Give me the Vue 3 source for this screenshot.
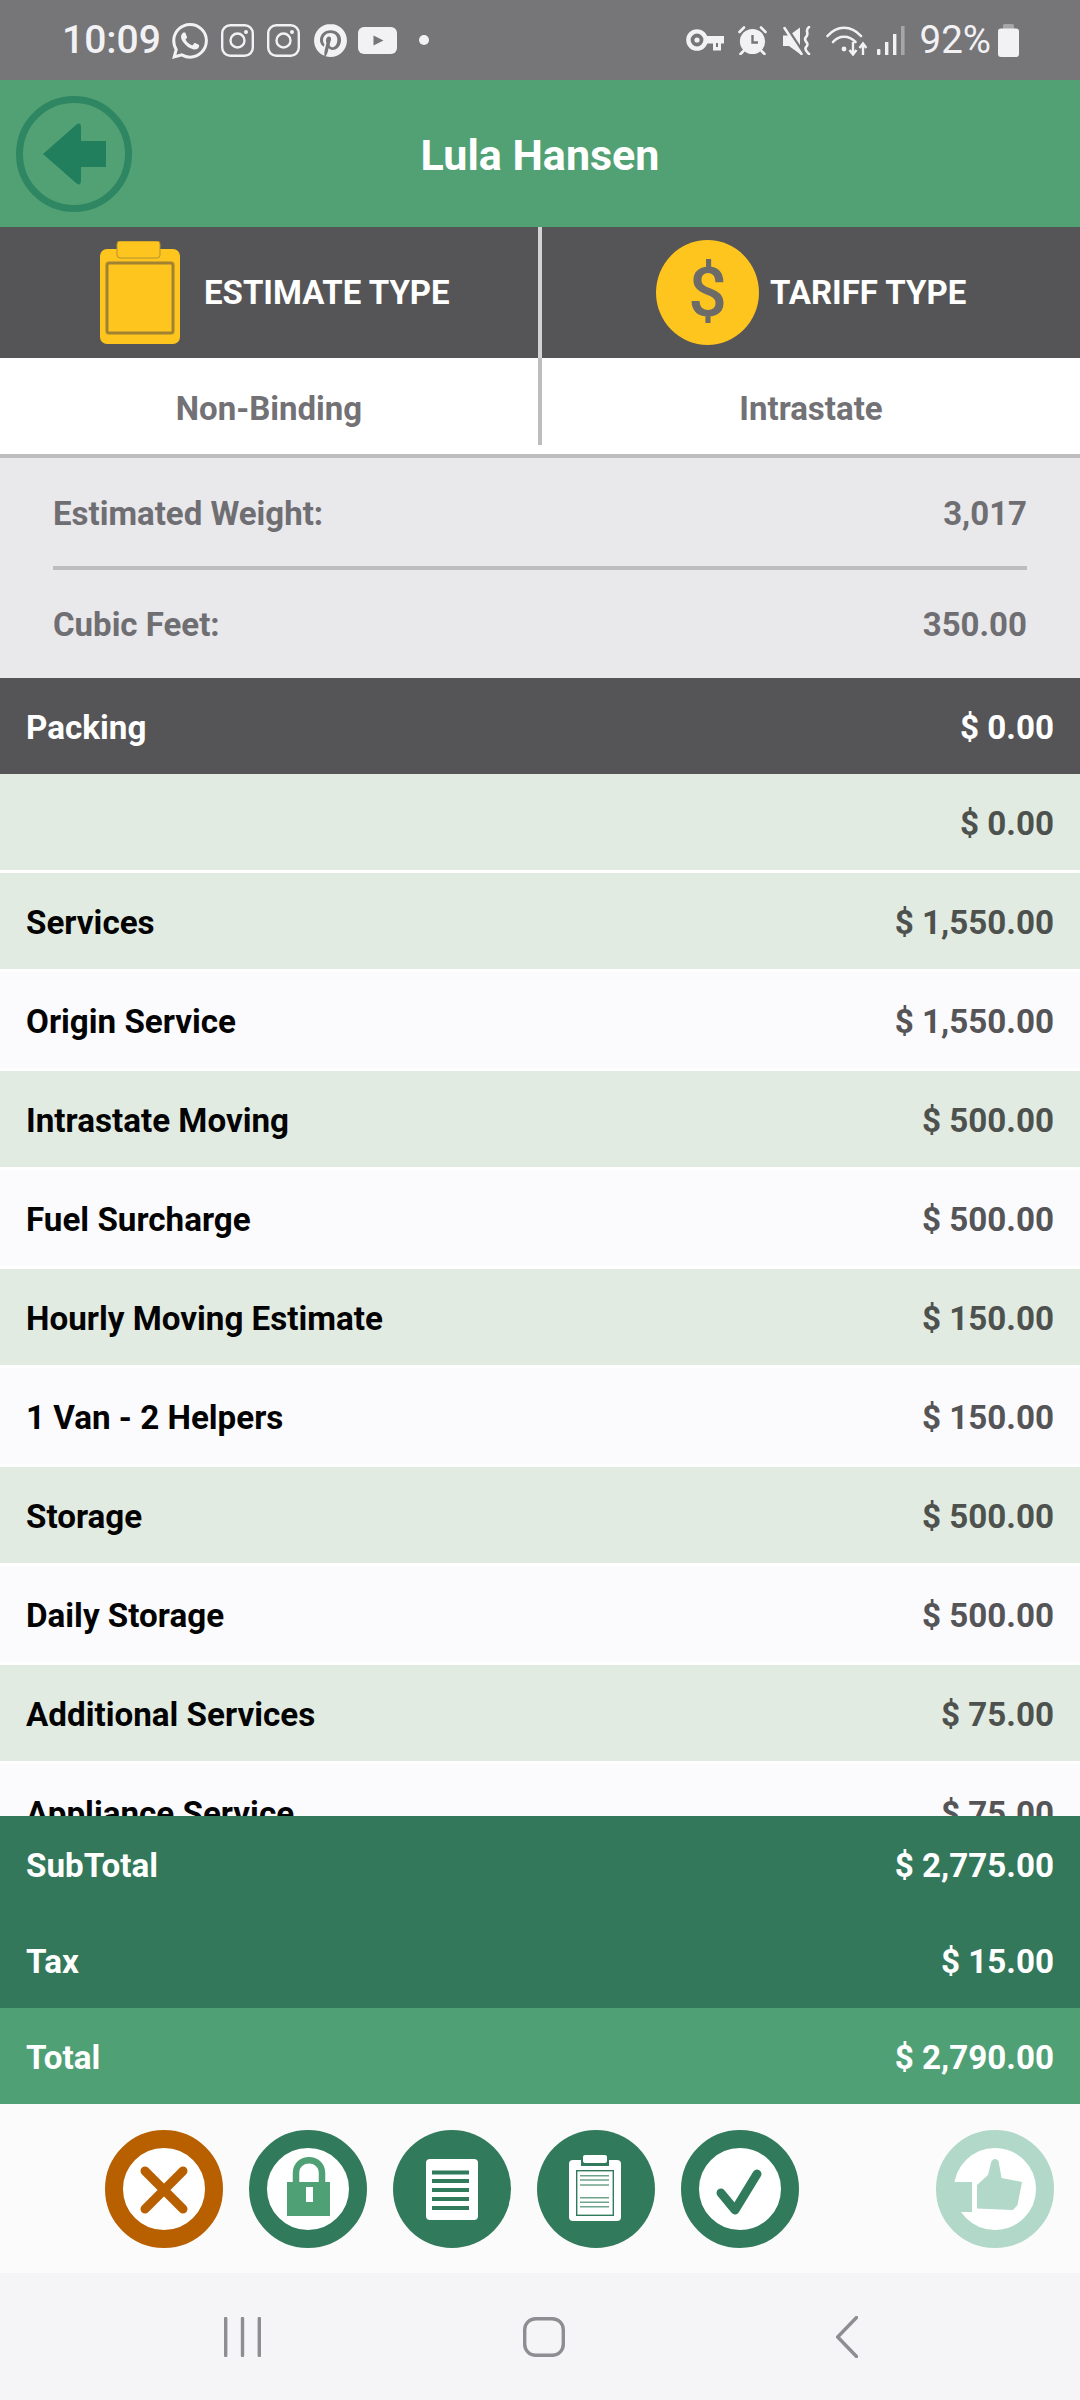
<template>
  <div class="screen">
    <!-- system status bar -->
    <div class="status-bar">
      <div class="status-left">
        <span class="clock">10:09</span>
        <svg class="ic-whatsapp" viewBox="0 0 24 24"><path fill="currentColor" d="M17.472 14.382c-.297-.149-1.758-.867-2.03-.967-.273-.099-.471-.148-.67.15-.197.297-.767.966-.94 1.164-.173.199-.347.223-.644.075-.297-.15-1.255-.463-2.39-1.475-.883-.788-1.48-1.761-1.653-2.059-.173-.297-.018-.458.13-.606.134-.133.298-.347.446-.52.149-.174.198-.298.298-.497.099-.198.05-.371-.025-.52-.075-.149-.669-1.612-.916-2.207-.242-.579-.487-.5-.669-.51-.173-.008-.371-.01-.57-.01-.198 0-.52.074-.792.372-.272.297-1.04 1.016-1.04 2.479 0 1.462 1.065 2.875 1.213 3.074.149.198 2.096 3.2 5.077 4.487.709.306 1.262.489 1.694.625.712.227 1.36.195 1.871.118.571-.085 1.758-.719 2.006-1.413.248-.694.248-1.289.173-1.413-.074-.124-.272-.198-.57-.347m-5.421 7.403h-.004a9.87 9.87 0 01-5.031-1.378l-.361-.214-3.741.982.998-3.648-.235-.374a9.86 9.86 0 01-1.51-5.26c.001-5.45 4.436-9.884 9.888-9.884 2.64 0 5.122 1.03 6.988 2.898a9.825 9.825 0 012.893 6.994c-.003 5.45-4.437 9.884-9.885 9.884m8.413-18.297A11.815 11.815 0 0012.05 0C5.495 0 .16 5.335.157 11.892c0 2.096.547 4.142 1.588 5.945L.057 24l6.305-1.654a11.882 11.882 0 005.683 1.448h.005c6.554 0 11.89-5.335 11.893-11.893a11.821 11.821 0 00-3.48-8.413z"/></svg>
        <svg v-for="n in 2" :key="n" class="ic-insta" viewBox="0 0 33 33">
          <rect x="1.2" y="1.2" width="30.6" height="30.6" rx="8" fill="none" stroke="currentColor" stroke-width="2.4"/>
          <circle cx="16.5" cy="16.5" r="7" fill="none" stroke="currentColor" stroke-width="2.4"/>
          <circle cx="25" cy="8" r="2" fill="currentColor"/>
        </svg>
        <svg class="ic-pin" viewBox="0 0 24 24"><path fill="currentColor" d="M12.017 0C5.396 0 .029 5.367.029 11.987c0 5.079 3.158 9.417 7.618 11.162-.105-.949-.199-2.403.041-3.439.219-.937 1.406-5.957 1.406-5.957s-.359-.72-.359-1.781c0-1.663.967-2.911 2.168-2.911 1.024 0 1.518.769 1.518 1.688 0 1.029-.653 2.567-.992 3.992-.285 1.193.6 2.165 1.775 2.165 2.128 0 3.768-2.245 3.768-5.487 0-2.861-2.063-4.869-5.008-4.869-3.41 0-5.409 2.562-5.409 5.199 0 1.033.394 2.143.889 2.741.099.12.112.225.085.345-.09.375-.293 1.199-.334 1.363-.053.225-.172.271-.401.165-1.495-.69-2.433-2.878-2.433-4.646 0-3.776 2.748-7.252 7.92-7.252 4.158 0 7.392 2.967 7.392 6.923 0 4.135-2.607 7.462-6.233 7.462-1.214 0-2.354-.629-2.758-1.379l-.749 2.848c-.269 1.045-1.004 2.352-1.498 3.146 1.123.345 2.306.535 3.55.535 6.607 0 11.985-5.365 11.985-11.987C23.97 5.39 18.592.026 11.985.026L12.017 0z"/></svg>
        <svg class="ic-yt" viewBox="0 0 39 27">
          <rect width="39" height="27" rx="6" fill="currentColor"/>
          <path d="M15.5 8.5 L25.5 13.5 L15.5 18.5 Z" fill="#767578"/>
        </svg>
        <span class="dot"></span>
      </div>
      <div class="status-right">
        <svg class="ic-key" viewBox="0 0 38 22">
          <circle cx="11" cy="11" r="8.6" fill="none" stroke="currentColor" stroke-width="4.4"/>
          <circle cx="11" cy="11" r="2.6" fill="currentColor"/>
          <path d="M20 7 H38 V14.5 H35 V21.5 H27 V14.5 H20 Z" fill="currentColor"/>
          <path d="M30 14 V18 H32 V14 Z" fill="#767578"/>
        </svg>
        <svg class="ic-alarm" viewBox="0 0 29 29">
          <circle cx="14.5" cy="15.5" r="12.6" fill="currentColor"/>
          <path d="M14.5 9 V16.5 H20" fill="none" stroke="#767578" stroke-width="2.4"/>
          <path d="M1.5 6 L6 1.5 M27.5 6 L23 1.5 M5.5 25 L2.5 28 M23.5 25 L26.5 28" stroke="currentColor" stroke-width="2.6" stroke-linecap="round"/>
        </svg>
        <svg class="ic-mute" viewBox="0 0 30 29">
          <path d="M0 9.5 H6 L17 1.5 V28 L6 20 H0 Z" fill="currentColor"/>
          <path d="M3 1 L20 27" stroke="#767578" stroke-width="3.4"/>
          <path d="M1.5 2 L18.5 28" stroke="currentColor" stroke-width="2.6" stroke-linecap="round"/>
          <path d="M26 1 C 21 5 27 7 23 11 C 19 15 28 17 23 21 C 21 24 24 26 26 28" fill="none" stroke="currentColor" stroke-width="2.6" stroke-linecap="round"/>
        </svg>
        <svg class="ic-wifi" viewBox="0 0 41 31">
          <path d="M1.5 11 C 11 0 25 0 35 11" fill="none" stroke="currentColor" stroke-width="2.6" stroke-linecap="round"/>
          <path d="M7 17 C 13 10 23 10 29.5 17" fill="none" stroke="currentColor" stroke-width="2.6" stroke-linecap="round"/>
          <circle cx="18" cy="24" r="2.4" fill="currentColor"/>
          <path d="M27 17 V29 M23.5 25 L27 29.5 L30.5 25 M37 30 V19 M33.5 23 L37 18.5 L40.5 23" fill="none" stroke="currentColor" stroke-width="2.4"/>
        </svg>
        <svg class="ic-signal" viewBox="0 0 28 29">
          <rect x="0" y="23" width="3.4" height="6" rx="1" fill="currentColor"/>
          <rect x="8" y="16" width="3.4" height="13" fill="currentColor"/>
          <rect x="16" y="8" width="3.4" height="21" fill="currentColor"/>
          <rect x="24" y="0" width="3.6" height="29" fill="#a6a5a8"/>
        </svg>
        <span class="battery-pct">92%</span>
        <svg class="ic-battery" viewBox="0 0 21 33">
          <rect x="5" y="0" width="11" height="6" rx="1.5" fill="#a6a5a8"/>
          <rect x="0" y="4.5" width="21" height="28.5" rx="3" fill="currentColor"/>
        </svg>
      </div>
    </div>

    <!-- customer header -->
    <header class="app-header">
      <div class="back-cell">
        <svg class="back-btn" viewBox="0 0 116 116">
          <circle cx="58" cy="58" r="54.5" fill="none" stroke="#2f8662" stroke-width="7"/>
          <path d="M27 58 L60 29 Q65 25 65 32 V45 H90 V71 H65 V84 Q65 91 60 87 Z" fill="#217f5e"/>
        </svg>
      </div>
      <h1 class="customer-name">Lula Hansen</h1>
    </header>

    <!-- estimate / tariff summary -->
    <section class="types">
      <div class="type-head estimate-head">
        <svg class="clipboard" viewBox="0 0 80 103">
          <rect x="0" y="8" width="80" height="95" rx="7" fill="#fec51f"/>
          <rect x="17" y="0" width="43" height="17" rx="3" fill="#fec51f" stroke="#b5912f" stroke-width="1"/>
          <rect x="7" y="22" width="66" height="70" rx="2" fill="#fec51f" stroke="#a08230" stroke-width="3"/>
        </svg>
        <span class="type-label">ESTIMATE TYPE</span>
      </div>
      <div class="type-head tariff-head">
        <div class="coin"><span>$</span></div>
        <span class="type-label">TARIFF TYPE</span>
      </div>
      <div class="type-value">Non-Binding</div>
      <div class="type-value divided">Intrastate</div>
    </section>

    <section class="measures">
      <div class="measure-row weight"><span>Estimated Weight:</span><span>3,017</span></div>
      <div class="measure-line"></div>
      <div class="measure-row cubic"><span>Cubic Feet:</span><span>350.00</span></div>
    </section>

    <!-- charge lines, clipped by the totals underneath -->
    <div class="charges">
      <div
        v-for="row in charges"
        :key="row.label + row.amount"
        class="charge"
        :class="row.kind"
      >
        <span class="charge-label">{{ row.label }}</span>
        <span class="charge-amount">{{ row.amount }}</span>
      </div>
    </div>

    <div class="totals">
      <div class="total-row"><span>SubTotal</span><span>$ 2,775.00</span></div>
      <div class="total-row"><span>Tax</span><span>$ 15.00</span></div>
      <div class="total-row grand"><span>Total</span><span>$ 2,790.00</span></div>
    </div>

    <!-- round action buttons -->
    <div class="actions">
      <svg class="action" viewBox="0 0 118 118">
        <circle cx="59" cy="59" r="50" fill="#fff" stroke="#b85f00" stroke-width="18"/>
        <path d="M40 41 L78 79 M78 41 L40 79" stroke="#b85f00" stroke-width="9" stroke-linecap="round"/>
      </svg>
      <svg class="action" viewBox="0 0 118 118">
        <circle cx="59" cy="59" r="50" fill="#fff" stroke="#327a5c" stroke-width="18"/>
        <path d="M47 54 V43 C47 26 73 26 73 43 V54" fill="none" stroke="#4fa175" stroke-width="6.5"/>
        <rect x="38" y="52" width="43" height="34" fill="#4fa175"/>
        <rect x="57" y="57" width="7" height="15" fill="#fff"/>
      </svg>
      <svg class="action" viewBox="0 0 118 118">
        <circle cx="59" cy="59" r="59" fill="#327a5c"/>
        <rect x="33" y="29" width="52" height="61" rx="4" fill="#fff"/>
        <g fill="#327a5c">
          <rect x="39" y="40.5" width="37" height="4"/>
          <rect x="39" y="49" width="37" height="4"/>
          <rect x="39" y="58" width="37" height="4"/>
          <rect x="39" y="67" width="37" height="4"/>
          <rect x="39" y="76" width="37" height="4"/>
        </g>
      </svg>
      <svg class="action" viewBox="0 0 118 118">
        <circle cx="59" cy="59" r="59" fill="#327a5c"/>
        <rect x="32" y="30" width="52" height="61" rx="4" fill="#fff"/>
        <rect x="44" y="27" width="28" height="9" fill="#327a5c"/>
        <rect x="46" y="25" width="24" height="8" rx="2" fill="#fff"/>
        <rect x="39.7" y="40.7" width="36.6" height="44.6" fill="none" stroke="#327a5c" stroke-width="1.4"/>
        <path d="M43 45.7 H72 M43 50 H72 M43 55 H72 M43 67.7 H72 M43 72.3 H72 M43 76.7 H72" stroke="#6ea48c" stroke-width="1.5"/>
      </svg>
      <svg class="action" viewBox="0 0 118 118">
        <circle cx="59" cy="59" r="50" fill="#fff" stroke="#327a5c" stroke-width="18"/>
        <path d="M40 63 L54 80 L76 44" fill="none" stroke="#327a5c" stroke-width="9" stroke-linecap="round" stroke-linejoin="round"/>
      </svg>
      <svg class="action thumb" viewBox="0 0 118 118">
        <circle cx="59" cy="59" r="50" fill="#fff" stroke="#b1d8c8" stroke-width="18"/>
        <path d="M14 52 H36 V82 H14 Z" fill="#b1d8c8"/>
        <path d="M41 55 L52 45 L55.5 31 Q59 27 62.5 31 L65.5 48 L86 52 L81.5 75 L77 80 L41 78.5 Z" fill="#b1d8c8"/>
      </svg>
    </div>

    <!-- android navigation bar -->
    <nav class="nav-bar">
      <svg class="nav-recents" viewBox="0 0 37 40">
        <path d="M1.7 1.5 V38.5 M18.5 1.5 V38.5 M35.3 1.5 V38.5" stroke="#8e8d91" stroke-width="3.4" stroke-linecap="round"/>
      </svg>
      <svg class="nav-home" viewBox="0 0 42 40">
        <rect x="1.7" y="1.7" width="38.6" height="36.6" rx="11" fill="none" stroke="#8e8d91" stroke-width="3.4"/>
      </svg>
      <svg class="nav-back" viewBox="0 0 22 42">
        <path d="M20.5 1.5 L1.7 21 L20.5 40.5" fill="none" stroke="#8e8d91" stroke-width="3.4" stroke-linecap="round"/>
      </svg>
    </nav>
  </div>
</template>

<script setup>
const charges = [
  { label: 'Packing', amount: '$ 0.00', kind: 'head' },
  { label: '', amount: '$ 0.00', kind: 'group' },
  { label: 'Services', amount: '$ 1,550.00', kind: 'group' },
  { label: 'Origin Service', amount: '$ 1,550.00', kind: 'item' },
  { label: 'Intrastate Moving', amount: '$ 500.00', kind: 'group' },
  { label: 'Fuel Surcharge', amount: '$ 500.00', kind: 'item' },
  { label: 'Hourly Moving Estimate', amount: '$ 150.00', kind: 'group' },
  { label: '1 Van - 2 Helpers', amount: '$ 150.00', kind: 'item' },
  { label: 'Storage', amount: '$ 500.00', kind: 'group' },
  { label: 'Daily Storage', amount: '$ 500.00', kind: 'item' },
  { label: 'Additional Services', amount: '$ 75.00', kind: 'group' },
  { label: 'Appliance Service', amount: '$ 75.00', kind: 'item' },
]
</script>

<style>
html,
body {
  margin: 0;
  background: #fff;
}
</style>

<style scoped>
.screen {
  width: 1080px;
  height: 2400px;
  display: flex;
  flex-direction: column;
  overflow: hidden;
  background: #fff;
  font-family: Roboto, 'Liberation Sans', sans-serif;
}

/* status bar */
.status-bar {
  height: 80px;
  flex: none;
  display: flex;
  justify-content: space-between;
  align-items: center;
  background: #767578;
  color: #f2f1f4;
  padding: 0 61px 0 62px;
  box-sizing: border-box;
}

.status-left,
.status-right {
  display: flex;
  align-items: center;
}

.clock,
.battery-pct {
  font-size: 39px;
  line-height: 44px;
  font-weight: 500;
}

.clock { width: 97px; }
.ic-whatsapp { width: 36px; height: 36px; margin-left: 13px; margin-top: 1px; }
.ic-insta { width: 33px; height: 33px; margin-left: 13px; }
.ic-pin { width: 33px; height: 33px; margin-left: 14px; }
.ic-yt { width: 39px; height: 27px; margin-left: 11px; margin-top: 1px; }
.dot {
  width: 10px;
  height: 10px;
  border-radius: 50%;
  background: currentColor;
  margin-left: 22px;
}

.ic-key { width: 38px; height: 22px; }
.ic-alarm { width: 29px; height: 29px; margin-left: 14px; }
.ic-mute { width: 30px; height: 29px; margin-left: 16px; }
.ic-wifi { width: 41px; height: 31px; margin-left: 13px; }
.ic-signal { width: 28px; height: 29px; margin-left: 10px; }
.battery-pct { margin-left: 15px; font-size: 38.5px; font-weight: 400; }
.ic-battery { width: 21px; height: 33px; margin-left: 7px; }

/* header */
.app-header {
  height: 147px;
  flex: none;
  display: grid;
  grid-template-columns: 1fr auto 1fr;
  align-items: center;
  background: #52a174;
}

.back-cell {
  padding-left: 16px;
  display: flex;
}

.back-btn {
  width: 116px;
  height: 116px;
}

.customer-name {
  margin: 0;
  padding-top: 2px;
  font-size: 43px;
  font-weight: 700;
  color: #fff;
}

/* estimate and tariff cells */
.types {
  flex: none;
  display: grid;
  grid-template-columns: 538px 1fr;
  grid-template-rows: 131px 96px;
  border-bottom: 4px solid #bdbcbf;
}

.type-head {
  display: flex;
  align-items: center;
  background: #555456;
}

.estimate-head {
  padding-left: 100px;
  gap: 24px;
}

.tariff-head {
  padding-left: 114px;
  gap: 11px;
  border-left: 4px solid #d4d3d6;
}

.clipboard {
  width: 80px;
  height: 103px;
}

.coin {
  width: 103px;
  height: 105px;
  border-radius: 50%;
  background: #fec51f;
  display: flex;
  align-items: center;
  justify-content: center;
  color: #6c6b68;
  font-size: 68px;
  font-weight: 500;
  line-height: 1;
}

.type-label {
  font-size: 33px;
  font-weight: 700;
  color: #fff;
}

.type-value {
  height: 87px;
  box-sizing: border-box;
  padding-top: 13px;
  display: flex;
  align-items: center;
  justify-content: center;
  font-size: 33px;
  font-weight: 700;
  color: #727175;
}

.type-value.divided {
  border-left: 4px solid #bdbcbf;
}

/* weight and volume */
.measures {
  flex: none;
  height: 220px;
  padding: 0 53px;
  background: #e9e8eb;
  color: #6f6e72;
  font-size: 33px;
  font-weight: 700;
}

.measure-row {
  height: 108px;
  box-sizing: border-box;
  display: flex;
  justify-content: space-between;
  align-items: center;
}

.measure-row.weight {
  padding-top: 3px;
}

.measure-row.cubic {
  padding-top: 1px;
}

.measure-line {
  height: 4px;
  background: #bdbcbf;
}

/* charge list */
.charges {
  flex: none;
  height: 1138px;
  overflow: hidden;
  background: #fff;
}

.charge {
  height: 96px;
  box-sizing: border-box;
  margin-bottom: 3px;
  padding: 2px 26px 0 26px;
  display: flex;
  justify-content: space-between;
  align-items: center;
  font-size: 33.2px;
  font-weight: 700;
}

.charge-label {
  color: #030303;
}

.charge-amount {
  color: #555456;
}

.charge.head {
  background: #555456;
  margin-bottom: 0;
}

.charge.head .charge-label,
.charge.head .charge-amount {
  color: #fff;
}

.charge.group {
  background: #e2ebe1;
}

.charge.group .charge-amount {
  color: #4e524e;
}

.charge.item {
  background: #fbfafd;
}

/* totals */
.totals {
  flex: none;
  background: #33785b;
  color: #fff;
  font-size: 33.2px;
  font-weight: 700;
}

.total-row {
  height: 96px;
  box-sizing: border-box;
  padding: 2px 26px 0 26px;
  display: flex;
  justify-content: space-between;
  align-items: center;
}

.total-row.grand {
  background: #4fa175;
}

/* actions */
.actions {
  flex: none;
  height: 169px;
  display: flex;
  align-items: center;
  gap: 26px;
  padding: 0 26px 0 105px;
  background: #fbfbfb;
}

.action {
  width: 118px;
  height: 118px;
}

.thumb {
  margin-left: auto;
}

/* navigation bar */
.nav-bar {
  flex: 1;
  display: flex;
  align-items: center;
  padding-left: 224px;
  background: #f5f4f7;
}

.nav-recents { width: 37px; height: 40px; }
.nav-home { width: 42px; height: 40px; margin-left: 262px; }
.nav-back { width: 22px; height: 42px; margin-left: 271px; }
</style>
